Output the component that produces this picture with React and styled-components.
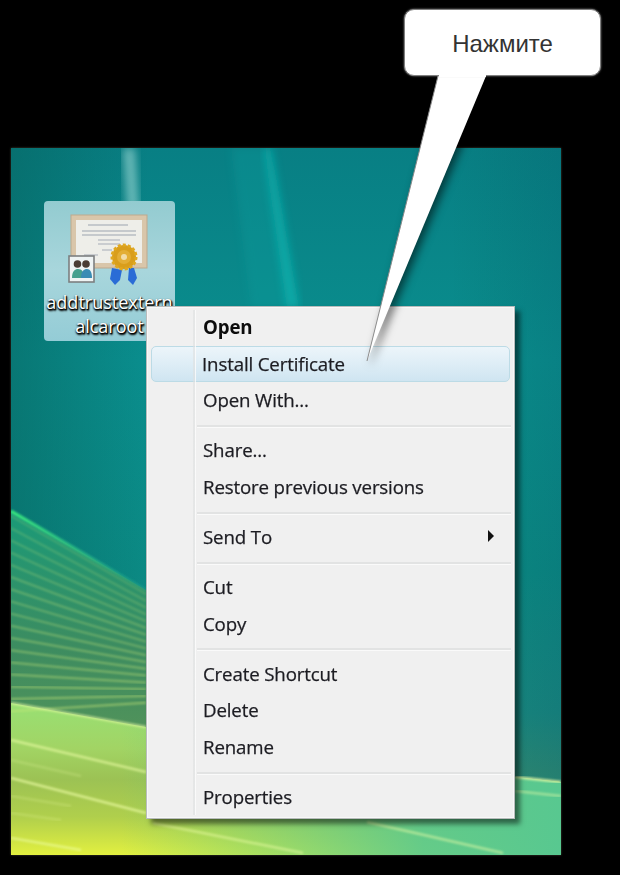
import styled, { createGlobalStyle } from 'styled-components'

const menuGroups = [
  [
    { label: 'Open', bold: true },
    { label: 'Install Certificate', active: true },
    { label: 'Open With...' },
  ],
  [{ label: 'Share...' }, { label: 'Restore previous versions' }],
  [{ label: 'Send To', submenu: true }],
  [{ label: 'Cut' }, { label: 'Copy' }],
  [{ label: 'Create Shortcut' }, { label: 'Delete' }, { label: 'Rename' }],
  [{ label: 'Properties' }],
]

// the fan of fine stripes on the green sheet
const fanRays = Array.from({ length: 17 }, (_, i) => ({
  y1: 368 + i * 12.2,
  y2: 446 + i * 6.8,
  opacity: 0.2 + i * 0.02,
}))

// longer streaks lower down: [x1, y1, x2, y2, opacity]
const streaks = [
  [0, 555, 135, 579, 0.6],
  [0, 592, 135, 624, 0.6],
  [0, 612, 70, 628, 0.2],
  [0, 630, 135, 665, 0.65],
  [0, 648, 60, 658, 0.2],
  [0, 665, 50, 672, 0.2],
  [0, 690, 70, 702, 0.55],
  [142, 675, 292, 705, 0.5],
  [356, 674, 492, 705, 0.5],
  [504, 629, 550, 634, 0.8],
  [504, 643, 550, 648, 0.45],
]

function Wallpaper() {
  return (
    <WallpaperSvg viewBox="0 0 550 707" preserveAspectRatio="none">
      <defs>
        <linearGradient id="sky" x1="0" y1="0" x2="0" y2="1">
          <stop offset="0" stopColor="#087f84" />
          <stop offset="0.3" stopColor="#0a8e8e" />
          <stop offset="0.6" stopColor="#0b8a84" />
          <stop offset="0.8" stopColor="#1a8880" />
          <stop offset="0.88" stopColor="#2e8a74" />
          <stop offset="1" stopColor="#3a9a70" />
        </linearGradient>
        <linearGradient id="skyShade" x1="0" y1="0" x2="1" y2="0">
          <stop offset="0" stopColor="#06605a" stopOpacity="0.5" />
          <stop offset="0.25" stopColor="#06605a" stopOpacity="0" />
          <stop offset="0.8" stopColor="#06605a" stopOpacity="0" />
          <stop offset="1" stopColor="#055a68" stopOpacity="0.25" />
        </linearGradient>
        <linearGradient id="sheet" x1="0" y1="0" x2="0" y2="1">
          <stop offset="0" stopColor="#1a9a78" />
          <stop offset="0.4" stopColor="#3d8c60" />
          <stop offset="1" stopColor="#6e9c52" />
        </linearGradient>
        <linearGradient id="meadow" x1="0" y1="0" x2="0" y2="1">
          <stop offset="0" stopColor="#98e074" />
          <stop offset="0.3" stopColor="#a2d464" />
          <stop offset="0.5" stopColor="#9cc254" />
          <stop offset="0.75" stopColor="#b0cf4c" />
          <stop offset="1" stopColor="#e2f040" />
        </linearGradient>
        <linearGradient id="meadowRight" x1="0" y1="0" x2="1" y2="0">
          <stop offset="0.2" stopColor="#58c890" stopOpacity="0" />
          <stop offset="0.75" stopColor="#58c890" stopOpacity="0.9" />
          <stop offset="1" stopColor="#58c890" stopOpacity="1" />
        </linearGradient>
        <linearGradient id="edge" x1="0" y1="0" x2="1" y2="0">
          <stop offset="0" stopColor="#3cf080" />
          <stop offset="1" stopColor="#3cc898" stopOpacity="0.2" />
        </linearGradient>
        <filter id="soft">
          <feGaussianBlur stdDeviation="4" />
        </filter>
        <filter id="softLine">
          <feGaussianBlur stdDeviation="0.8" />
        </filter>
      </defs>
      <rect width="550" height="707" fill="url(#sky)" />
      <rect width="550" height="707" fill="url(#skyShade)" />
      <path d="M112 0 L124 0 L128 62 L116 62 Z" fill="#a8e0dc" opacity="0.6" filter="url(#soft)" />
      <path d="M220 0 L256 0 L282 160 L240 160 Z" fill="#10a0a0" opacity="0.3" filter="url(#soft)" />
      <path d="M253 0 L260 0 L288 160 L276 160 Z" fill="#0cb4b0" opacity="0.8" filter="url(#soft)" />
      <path d="M0 363 L135 442 L504 600 L504 707 L0 707 Z" fill="url(#sheet)" />
      <path d="M0 555 L135 579 L504 629 L550 634 L550 707 L0 707 Z" fill="url(#meadow)" />
      <path d="M0 555 L135 579 L504 629 L550 634 L550 707 L0 707 Z" fill="url(#meadowRight)" />
      <path d="M0 363 L135 442" stroke="url(#edge)" strokeWidth="3" filter="url(#softLine)" />
      {fanRays.map((ray) => (
        <line
          key={ray.y1}
          x1="0"
          y1={ray.y1}
          x2="135"
          y2={ray.y2}
          stroke="#c8e878"
          strokeWidth="2"
          opacity={ray.opacity}
          filter="url(#softLine)"
        />
      ))}
      {streaks.map(([x1, y1, x2, y2, opacity]) => (
        <line
          key={`${x1}-${y1}`}
          x1={x1}
          y1={y1}
          x2={x2}
          y2={y2}
          stroke="#f0ffa8"
          strokeWidth="2.5"
          opacity={opacity}
          filter="url(#softLine)"
        />
      ))}
    </WallpaperSvg>
  )
}

function CertificateIcon() {
  return (
    <IconSvg viewBox="0 0 80 72">
      <rect x="3" y="1" width="76" height="53" fill="#d9c6aa" stroke="#bda98e" />
      <rect x="8" y="6" width="66" height="43" fill="#eeeee9" />
      <g stroke="#a4abb6" strokeWidth="1.3" opacity="0.75">
        <line x1="20" y1="11" x2="60" y2="11" />
        <line x1="14" y1="17" x2="68" y2="17" />
        <line x1="14" y1="21" x2="68" y2="21" />
        <line x1="30" y1="26" x2="52" y2="26" />
        <line x1="30" y1="30" x2="52" y2="30" />
        <line x1="16" y1="41" x2="30" y2="41" />
        <line x1="34" y1="36" x2="44" y2="36" />
      </g>
      <path d="M44 54 L42 65 L47 71 L52 66 L54 56 Z" fill="#2a6cd6" />
      <path d="M61 54 L60 66 L65 71 L69 64 L66 54 Z" fill="#2a6cd6" />
      <circle cx="56" cy="43" r="12" fill="#d99e1c" stroke="#e0a820" strokeWidth="3" strokeDasharray="3 2" />
      <circle cx="56" cy="43" r="7" fill="#e3ae36" />
      <circle cx="56" cy="43" r="3" fill="#f2dca8" />
      <rect x="1" y="42" width="25" height="26" fill="#eef3f3" stroke="#7c7f80" strokeWidth="1.6" />
      <circle cx="9.5" cy="50" r="3.8" fill="#4a3c34" />
      <circle cx="18" cy="50" r="3.8" fill="#4a3c34" />
      <path d="M4 64 C4 57 7 55 10 55 C14 55 16 58 16 64 Z" fill="#46a08e" />
      <path d="M13 64 C13 57 16 55 19 55 C22 55 24 58 24 64 Z" fill="#3a8cb4" />
    </IconSvg>
  )
}

function App() {
  return (
    <>
      <GlobalStyle />
      <Page>
        <Desktop>
          <Wallpaper />
          <DesktopIcon>
            <CertificateIcon />
            <IconLabel>addtrustextern alcaroot</IconLabel>
          </DesktopIcon>
          <Menu>
            {menuGroups.map((group, g) => (
              <MenuGroup key={g} $first={g === 0}>
                {group.map((item) => (
                  <MenuRow key={item.label} $active={item.active}>
                    <MenuLabel $bold={item.bold}>{item.label}</MenuLabel>
                    {item.submenu && <SubmenuArrow />}
                  </MenuRow>
                ))}
              </MenuGroup>
            ))}
          </Menu>
        </Desktop>
        <Callout>
          <CalloutTail viewBox="0 0 130 290">
            <path d="M72 0 L120 0 L1 285 Z" fill="#fff" />
            <path d="M72 0 L1 285" fill="none" stroke="#8a8a8a" strokeWidth="1" />
          </CalloutTail>
          <CalloutBox>Нажмите</CalloutBox>
          <CalloutSeam />
        </Callout>
      </Page>
    </>
  )
}

const GlobalStyle = createGlobalStyle`
  html, body {
    margin: 0;
    padding: 0;
    background: #000;
  }
`

const Page = styled.div`
  position: relative;
  width: 620px;
  height: 875px;
  padding: 148px 0 0 11px;
  box-sizing: border-box;
  background: #000;
  overflow: hidden;
`

const Desktop = styled.div`
  position: relative;
  width: 550px;
  height: 707px;
  box-shadow: 0 0 2px #4a4a3a;
`

const WallpaperSvg = styled.svg`
  display: block;
  width: 100%;
  height: 100%;
`

const DesktopIcon = styled.div`
  position: absolute;
  left: 33px;
  top: 53px;
  width: 131px;
  height: 140px;
  box-sizing: border-box;
  padding-top: 13px;
  display: flex;
  flex-direction: column;
  align-items: center;
  border-radius: 4px;
  background: linear-gradient(180deg, #93cbd0 0%, #a8d6dc 50%, #94ccd6 100%);
`

const IconSvg = styled.svg`
  display: block;
  width: 80px;
  height: 72px;
  margin-right: 4px;
  filter: blur(0.7px);
`

const IconLabel = styled.div`
  width: 131px;
  margin-top: 4px;
  font-family: 'Open Sans', 'Liberation Sans', sans-serif;
  font-size: 18px;
  line-height: 24px;
  text-align: center;
  color: #fff;
  text-shadow: 1px 1px 1px #000, 1px 2px 2px #000, 0 1px 2px #000;
  word-break: break-word;
`

const Menu = styled.div`
  position: absolute;
  left: 135px;
  top: 158px;
  width: 369px;
  height: 513px;
  box-sizing: border-box;
  padding: 2px 3px 2px 2px;
  background: #f0f0f0;
  border: 1px solid #b8bcbc;
  outline: 1px solid #f8f8f8;
  outline-offset: -2px;
  box-shadow: 5px 5px 5px rgba(0, 0, 0, 0.5);
  /* icon gutter rule */
  &::after {
    content: '';
    position: absolute;
    left: 46px;
    top: 3px;
    bottom: 3px;
    width: 3px;
    background: linear-gradient(90deg, rgba(222, 224, 224, 0.6) 66%, rgba(252, 252, 252, 0.8) 66%);
  }
`

const MenuGroup = styled.div`
  position: relative;
  padding-top: ${(p) => (p.$first ? '0' : '13.3px')};
  &::before {
    content: ${(p) => (p.$first ? 'none' : "''")};
    position: absolute;
    left: 48px;
    right: 0;
    top: 6px;
    height: 3px;
    background: #e2e3e3;
    border-bottom: 1px solid #fafafa;
    box-sizing: border-box;
  }
`

const MenuRow = styled.div`
  display: flex;
  align-items: center;
  justify-content: space-between;
  height: 36.7px;
  box-sizing: border-box;
  padding: 0 17px 2px 54px;
  ${(p) =>
    p.$active &&
    `
    background: linear-gradient(180deg, #ecf5fa 0%, #deedf6 50%, #cfe5f1 100%);
    border: 1px solid #bcdbe6;
    border-radius: 5px;
    margin: 0 1px 0 2px;
    padding-left: 50px;
  `}
`

const MenuLabel = styled.span`
  font-family: 'Open Sans', 'Noto Sans', sans-serif;
  font-size: 18.7px;
  font-weight: ${(p) => (p.$bold ? 700 : 400)};
  color: ${(p) => (p.$bold ? '#0c0c0c' : '#1c1c22')};
  -webkit-text-stroke: ${(p) => (p.$bold ? '0' : '0.25px #1c1c22')};
  letter-spacing: -0.15px;
  white-space: nowrap;
  filter: blur(0.35px);
`

const SubmenuArrow = styled.i`
  display: block;
  width: 0;
  height: 0;
  border-left: 6px solid #111;
  border-top: 6px solid transparent;
  border-bottom: 6px solid transparent;
`

const Callout = styled.div`
  position: absolute;
  left: 404px;
  top: 9px;
  width: 197px;
  height: 67px;
`

const CalloutBox = styled.div`
  position: relative;
  display: flex;
  align-items: center;
  justify-content: center;
  width: 100%;
  height: 100%;
  padding-top: 2px;
  box-sizing: border-box;
  background: #fff;
  border: 1.5px solid #808080;
  border-radius: 10px;
  box-shadow: 0 0 2px #999;
  font-family: 'Liberation Sans', Arial, sans-serif;
  font-size: 24px;
  color: #333;
`

/* hides the box outline where the pointer leaves it */
const CalloutSeam = styled.div`
  position: absolute;
  left: 35px;
  top: 64px;
  width: 47px;
  height: 4px;
  background: #fff;
`

const CalloutTail = styled.svg`
  position: absolute;
  left: -38px;
  top: 67px;
  width: 130px;
  height: 290px;
  overflow: visible;
  filter: drop-shadow(4px 3px 4px rgba(0, 0, 0, 0.55));
`

export default App
